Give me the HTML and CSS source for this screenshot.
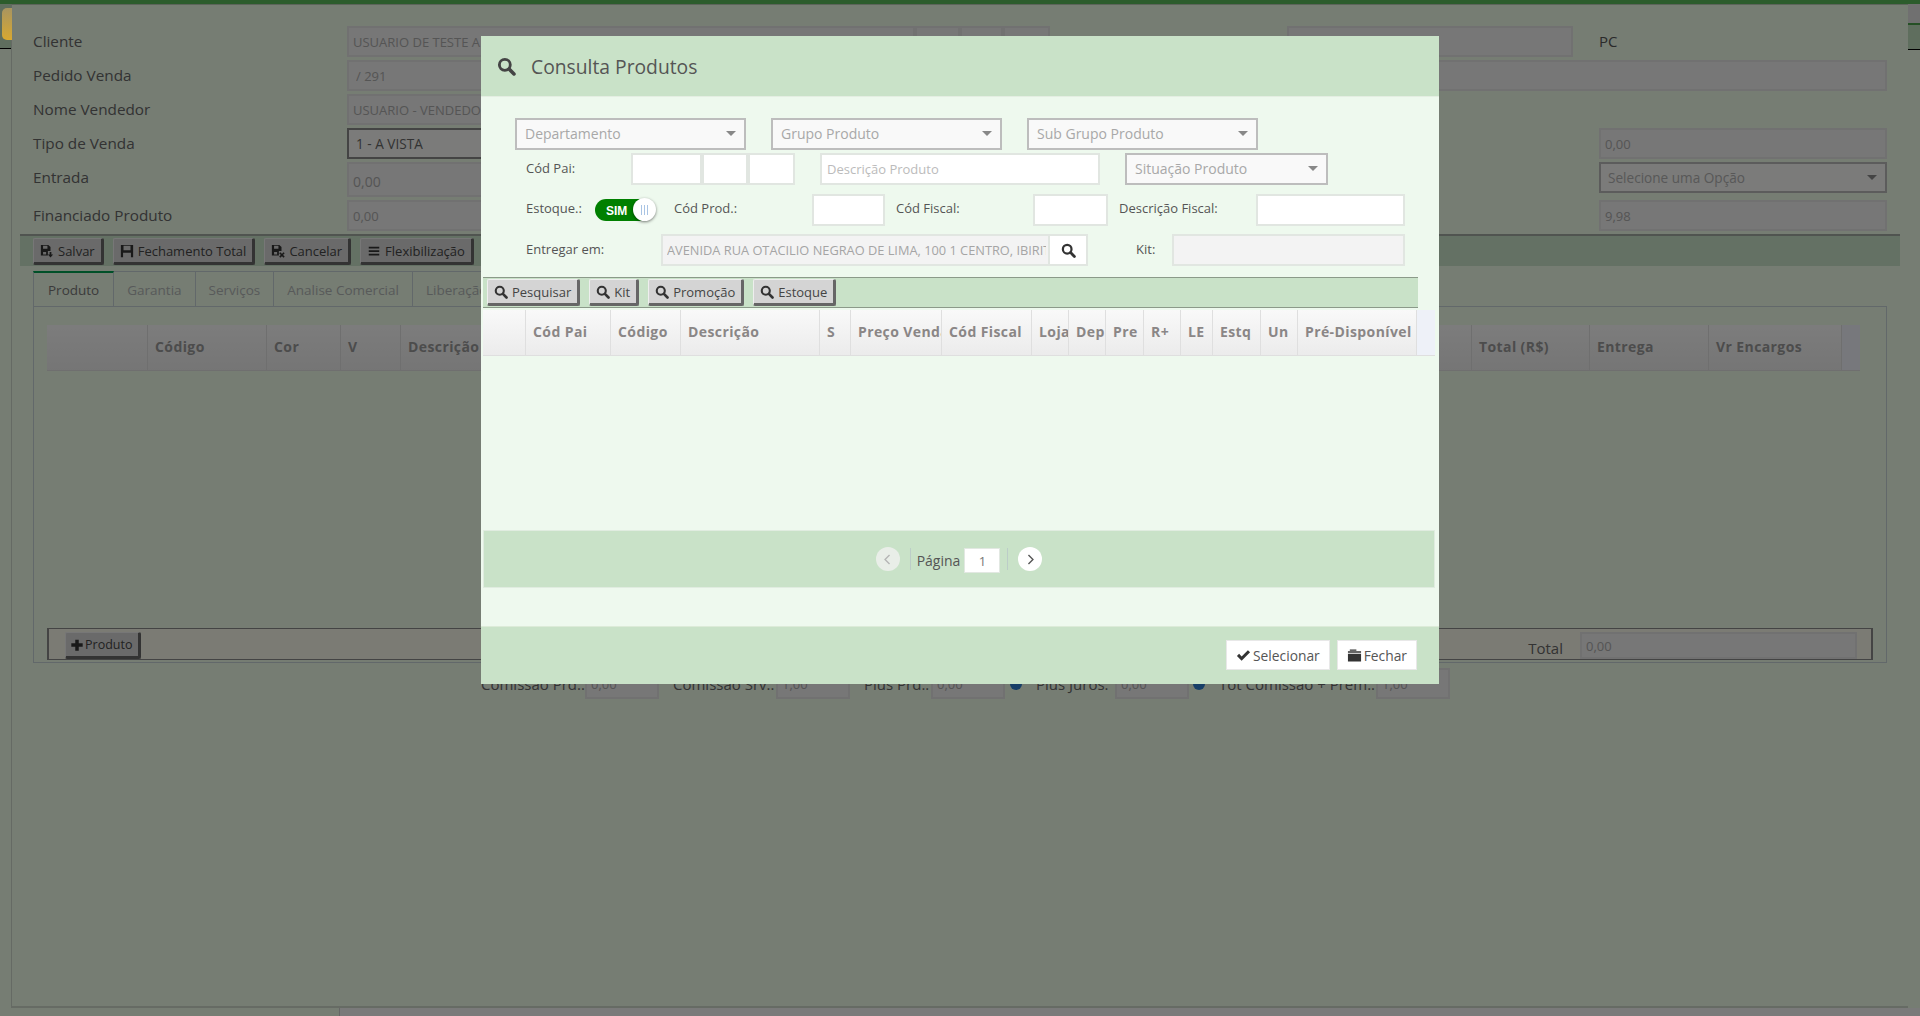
FILE: index.html
```html
<!DOCTYPE html>
<html lang="pt-BR">
<head>
<meta charset="utf-8">
<title>Consulta Produtos</title>
<link rel="stylesheet" href="styles.css">
</head>
<body>
<svg class="defs" aria-hidden="true">
  <symbol id="i-search" viewBox="0 0 16 16"><circle cx="6.6" cy="6.6" r="4.6" fill="none" stroke="currentColor" stroke-width="2.4"/><path d="M10.2 10.2 14.3 14.3" fill="none" stroke="currentColor" stroke-width="3" stroke-linecap="round"/></symbol>
  <symbol id="i-save-down" viewBox="0 0 16 16"><path fill="currentColor" fill-rule="evenodd" d="M1 1h8.500L12 3.500V8H9v5H1zM3.500 2v3.500h5V2zM3.500 9v3h3.500V9z"/><path fill="currentColor" d="M11 9h2v3h2l-3 3.500-3-3.500h2z"/></symbol>
  <symbol id="i-save" viewBox="0 0 16 16"><path fill="currentColor" fill-rule="evenodd" d="M1 1h14v14H1zM4 2v5h8V2zM3.500 10v5h9v-5z"/></symbol>
  <symbol id="i-save-x" viewBox="0 0 16 16"><path fill="currentColor" fill-rule="evenodd" d="M1 1h8.500L12 3.500V8H9v5H1zM3.500 2v3.500h5V2zM3.500 9v3h3.500V9z"/><path fill="none" stroke="currentColor" stroke-width="1.800" d="M10 10l5 5M15 10l-5 5"/></symbol>
  <symbol id="i-bars" viewBox="0 0 16 16"><path fill="currentColor" d="M2 3h12v2H2zM2 7h12v2H2zM2 11h12v2H2z"/></symbol>
  <symbol id="i-plus" viewBox="0 0 16 16"><path fill="currentColor" d="M6 2h4v4h4.500v4H10v4.500H6V10H1.500V6H6z"/></symbol>
  <symbol id="i-check" viewBox="0 0 16 16"><path fill="currentColor" d="M1 8.500 3.300 6.200 6 9 12.700 2.300 15 4.600 6 13.600z"/></symbol>
  <symbol id="i-box" viewBox="0 0 16 16"><path fill="currentColor" d="M1 6h14v8.500H1zM1 3.500h14V5H1zM3 1.500h7V3H3z"/></symbol>
  <symbol id="i-left" viewBox="0 0 16 16"><path fill="none" stroke="currentColor" stroke-width="1.700" d="M10.500 2.500 5 8l5.500 5.500"/></symbol>
  <symbol id="i-right" viewBox="0 0 16 16"><path fill="none" stroke="currentColor" stroke-width="1.700" d="M5.500 2.500 11 8l-5.500 5.500"/></symbol>
</svg>

<div class="page">
  <div class="topline"></div>
  <div class="desk">
    <div class="side side-left"><div class="side-strip"><span class="app-icon"></span></div></div>
    <main class="window">
      <div class="bg-form">
        <div class="bg-row">
          <span class="bg-label">Cliente</span>
          <input class="bg-input w-568" value="USUARIO DE TESTE A" readonly>
          <input class="bg-input w-45" readonly>
          <input class="bg-input w-43" readonly>
          <input class="bg-input w-47" readonly>
          <input class="bg-input w-286 ml-237" readonly>
          <span class="bg-pc">PC</span>
        </div>
        <div class="bg-row">
          <span class="bg-label">Pedido Venda</span>
          <input class="bg-input w-1540 pad-7" value="/ 291" readonly>
        </div>
        <div class="bg-row">
          <span class="bg-label">Nome Vendedor</span>
          <input class="bg-input w-568" value="USUARIO - VENDEDOR" readonly>
        </div>
        <div class="bg-row">
          <span class="bg-label">Tipo de Venda</span>
          <div class="bg-select dark w-568">1 - A VISTA</div>
          <input class="bg-input w-288 ml-684" value="0,00" readonly>
        </div>
        <div class="bg-row tall">
          <span class="bg-label">Entrada</span>
          <input class="bg-input w-568 h-35" value="0,00" readonly>
          <div class="bg-select w-288 ml-684">Selecione uma Opção<i class="caret"></i></div>
        </div>
        <div class="bg-row">
          <span class="bg-label">Financiado Produto</span>
          <input class="bg-input w-568" value="0,00" readonly>
          <input class="bg-input w-288 ml-684" value="9,98" readonly>
        </div>
      </div>

      <div class="toolbar bg-toolbar">
        <button class="tool-btn"><svg class="ic"><use href="#i-save-down"/></svg>Salvar</button>
        <button class="tool-btn"><svg class="ic"><use href="#i-save"/></svg>Fechamento Total</button>
        <button class="tool-btn"><svg class="ic"><use href="#i-save-x"/></svg>Cancelar</button>
        <button class="tool-btn"><svg class="ic"><use href="#i-bars"/></svg>Flexibilização</button>
      </div>

      <div class="tabs">
        <span class="tab active">Produto</span>
        <span class="tab">Garantia</span>
        <span class="tab">Serviços</span>
        <span class="tab">Analise Comercial</span>
        <span class="tab">Liberação</span>
      </div>
      <section class="panel">
        <div class="thead bg-thead">
          <span></span><span>Código</span><span>Cor</span><span>V</span><span>Descrição</span><span>Total (R$)</span><span>Entrega</span><span>Vr Encargos</span><span class="scroller"></span>
        </div>
        <div class="totals">
          <button class="tool-btn small"><svg class="ic"><use href="#i-plus"/></svg>Produto</button>
          <span class="total-label">Total</span>
          <input class="bg-input total-input" value="0,00" readonly>
        </div>
      </section>

      <div class="commission">
        <span class="cm-label w-104">Comissão Prd.:</span><input class="bg-input cm-input" value="0,00" readonly>
        <span class="cm-label w-103 ml-14">Comissão Srv.:</span><input class="bg-input cm-input" value="1,00" readonly>
        <span class="cm-label w-67 ml-14">Plus Prd.:</span><input class="bg-input cm-input" value="0,00" readonly>
        <i class="radio ml-5"></i>
        <span class="cm-label w-79 ml-14">Plus Juros:</span><input class="bg-input cm-input" value="0,00" readonly>
        <i class="radio ml-4"></i>
        <span class="cm-label w-157 ml-14">Tot Comissão + Prem.:</span><input class="bg-input cm-input" value="1,00" readonly>
      </div>
    </main>
    <div class="side side-right"><div class="side-top"></div><div class="side-strip short"></div></div>
  </div>
  <div class="bottom"><div class="bottom-left"></div><div class="bottom-right"></div></div>
</div>

<div class="overlay">
  <div class="modal">
    <header class="modal-head">
      <svg class="head-icon"><use href="#i-search"/></svg>
      <h1>Consulta Produtos</h1>
    </header>
    <div class="modal-body">
      <div class="f-row first">
        <div class="select w-231">Departamento<i class="caret"></i></div>
        <div class="select w-231 ml-25">Grupo Produto<i class="caret"></i></div>
        <div class="select w-231 ml-25">Sub Grupo Produto<i class="caret"></i></div>
      </div>
      <div class="f-row second">
        <label class="f-label w-105">Cód Pai:</label>
        <input class="field w-71">
        <input class="field w-46">
        <input class="field w-47">
        <input class="field w-280 ml-25" placeholder="Descrição Produto">
        <div class="select w-203 ml-25">Situação Produto<i class="caret"></i></div>
      </div>
      <div class="f-row third">
        <label class="f-label w-69">Estoque.:</label>
        <div class="toggle"><span class="toggle-text">SIM</span><span class="knob"><b></b><b></b><b></b></span></div>
        <label class="f-label w-138 ml-19">Cód Prod.:</label>
        <input class="field w-73">
        <label class="f-label w-137 ml-11">Cód Fiscal:</label>
        <input class="field w-75">
        <label class="f-label w-137 ml-11">Descrição Fiscal:</label>
        <input class="field w-149">
      </div>
      <div class="f-row fourth">
        <label class="f-label w-135">Entregar em:</label>
        <input class="field off address w-389" value="AVENIDA RUA OTACILIO NEGRAO DE LIMA, 100 1 CENTRO, IBIRITE" readonly>
        <button class="search-btn"><svg class="ic-16"><use href="#i-search"/></svg></button>
        <label class="f-label w-36 ml-48">Kit:</label>
        <input class="field off w-233" readonly>
      </div>

      <div class="toolbar modal-toolbar">
        <button class="tool-btn"><svg class="ic"><use href="#i-search"/></svg>Pesquisar</button>
        <button class="tool-btn"><svg class="ic"><use href="#i-search"/></svg>Kit</button>
        <button class="tool-btn"><svg class="ic"><use href="#i-search"/></svg>Promoção</button>
        <button class="tool-btn"><svg class="ic"><use href="#i-search"/></svg>Estoque</button>
      </div>

      <div class="thead modal-thead">
        <span></span><span>Cód Pai</span><span>Código</span><span>Descrição</span><span>S</span><span>Preço Venda</span><span>Cód Fiscal</span><span>Loja</span><span>Dep</span><span>Pre</span><span>R+</span><span>LE</span><span>Estq</span><span>Un</span><span>Pré-Disponível</span><span class="scroller"></span>
      </div>
      <div class="grid-empty"></div>

      <div class="pager">
        <span class="circle off"><svg class="ic-12"><use href="#i-left"/></svg></span>
        <i class="pager-sep first-sep"></i>
        <span class="pager-text">Página</span>
        <input class="pager-input" value="1" readonly>
        <i class="pager-sep"></i>
        <span class="circle next"><svg class="ic-12"><use href="#i-right"/></svg></span>
      </div>
    </div>
    <footer class="modal-foot">
      <button class="foot-btn"><svg class="ic-14"><use href="#i-check"/></svg>Selecionar</button>
      <button class="foot-btn"><svg class="ic-14"><use href="#i-box"/></svg>Fechar</button>
    </footer>
  </div>
</div>
</body>
</html>
```

FILE: styles.css
```css
* { box-sizing: border-box; }
html, body { margin: 0; height: 1016px; overflow: hidden; }
body { font-family: "Open Sans", sans-serif; color: #555; background: #ecfae6; position: relative; }
.defs { position: absolute; width: 0; height: 0; }
input, button { font-family: inherit; outline: none; margin: 0; }

.page { height: 1016px; display: flex; flex-direction: column; }
.topline { height: 4px; background: #58b858; flex: none; }
.desk { display: flex; height: 1004px; flex: none; }
.side { width: 12px; flex: none; }
.side-left { width: 11px; }
.side-strip { height: 45px; background: #bfdcbc; border-bottom: 1px solid #000; position: relative; }
.side-strip.short { height: 25px; }
.app-icon { display: block; width: 10px; height: 32px; margin-left: 2px; background: linear-gradient(#a89560, #d8a830); border-radius: 5px 0 0 5px; position: relative; top: 4px; z-index: 2; }
.side-top { height: 21px; background: #e0e0e0; border-bottom: 2px solid #4aa04a; }
.window { width: 1897px; flex: none; border-left: 1px solid #cbd4c8; border-top: 1px solid #b8c8b4; border-bottom: 2px solid #ccd6c8; padding-top: 21px; display: flex; flex-direction: column; }

.bg-form { padding-left: 21px; display: flex; flex-direction: column; gap: 3px; }
.bg-row { display: flex; height: 31px; align-items: flex-start; }
.bg-row.tall { height: 35px; }
.bg-label { width: 314px; flex: none; font-size: 15.300px; line-height: 31px; color: #666; }
.bg-pc { margin-left: 26px; font-size: 15px; line-height: 31px; color: #555; }
.bg-input { height: 31px; flex: none; border: 2px solid #e2e2e2; background: #eeeeee; color: #aaa; font-size: 13px; padding: 0 4px; }
.pad-7 { padding-left: 7px; }
.h-35 { height: 35px; font-size: 14px; padding-top: 3px; }
.bg-select { height: 31px; flex: none; border: 2px solid #b8b8b8; background: #f6f6f4; color: #b0b0b0; font-size: 13.600px; line-height: 28px; padding: 0 7px; position: relative; }
.bg-select.dark { border-color: #888; color: #666; }

.toolbar { display: flex; flex: none; background: #c9e2c8; border-top: 1px solid #8b9a89; border-bottom: 1px solid #8b9a89; }
.bg-toolbar { margin: 3px 0 0 8px; width: 1880px; height: 32px; padding: 2px 0 0 13px; gap: 9px; border-bottom: 0; border-top: 2px solid #a0a8a0; }
.modal-toolbar { margin: 11px 0 0 2px; width: 935px; height: 31px; padding: 1px 0 0 4px; gap: 9px; }
.tool-btn { height: 27px; padding: 0 6px; display: flex; align-items: center; gap: 4px; font-size: 13px; color: #444; background: #d4d4d4; border: 0; border-right: 3px solid #666; border-bottom: 3px solid #666; border-top: 1px solid #eee; border-left: 1px solid #eee; border-radius: 2px; white-space: nowrap; }
.ic { width: 14px; height: 14px; flex: none; color: #333; }
.ic-16 { width: 15px; height: 15px; color: #333; display: block; }
.ic-14 { width: 15px; height: 15px; color: #333; flex: none; }
.ic-12 { width: 13px; height: 13px; display: block; }

.tabs { display: flex; margin: 5px 0 0 21px; height: 36px; flex: none; }
.tab { height: 36px; padding: 0 13px; font-size: 13.500px; line-height: 36px; color: #b0b4b4; border: 1px solid #c4d0d4; border-left: 0; white-space: nowrap; }
.tab.active { color: #777; border-top: 2px solid #00a050; border-bottom: 0; border-left: 1px solid #c4d0d4; background: #ecfae6; line-height: 34px; padding: 0 14px; }
.panel { margin: -1px 0 0 21px; width: 1854px; height: 357px; flex: none; border: 1px solid #c4d0d4; display: flex; flex-direction: column; }
.thead { display: grid; background: linear-gradient(#f9f9f9, #ebebeb); flex: none; font-size: 14px; font-weight: 700; color: #8a8686; letter-spacing: .4px; }
.thead > span { border-right: 1px solid #dfdfdf; border-bottom: 1px solid #dfdfdf; padding-left: 7px; overflow: hidden; white-space: nowrap; }
.thead > .scroller { background: #eef1f8; border-right: 0; }
.bg-thead { margin: 18px 0 0 13px; width: 1813px; height: 46px; line-height: 44px; grid-template-columns: 101px 119px 74px 60px 1071px 118px 119px 133px 18px; color: #999; }
.totals { margin: auto 0 2px 13px; width: 1826px; height: 32px; border: 2px solid #888; border-top-width: 1px; border-bottom-width: 1px; background: #f6f6e8; display: flex; align-items: flex-end; padding-left: 16px; flex: none; }
.tool-btn.small { width: 76px; height: 27px; gap: 1px; padding: 0 4px; font-size: 12.500px; color: #444; }
.total-label { margin-left: auto; font-size: 15px; color: #666; line-height: 21px; }
.total-input { width: 277px; height: 27px; margin: 0 14px 0 17px; }

.commission { display: flex; align-items: center; margin: 5px 0 0 469px; height: 31px; flex: none; font-size: 15px; color: #666; }
.cm-label { flex: none; white-space: nowrap; }
.cm-input { width: 74px; height: 31px; font-size: 13px; }
.radio { width: 12px; height: 12px; flex: none; border-radius: 50%; background: #2f7fd0; }

.bottom { display: flex; height: 8px; flex: none; }
.bottom-left { width: 339px; }
.bottom-right { flex: 1; background: #f4f4f4; border-left: 1px solid #ccc; }

.overlay { position: absolute; inset: 0; background: rgba(0,0,0,.5); }
.modal { width: 958px; height: 648px; margin: 36px auto 0; display: flex; flex-direction: column; background: #eef9ee; }
.modal-head { height: 61px; flex: none; background: #c9e2c8; border-bottom: 1px solid #e4eee2; display: flex; align-items: center; padding-left: 16px; }
.head-icon { width: 19px; height: 19px; color: #444; flex: none; }
.modal-head h1 { margin: 0 0 0 15px; font-size: 19.300px; font-weight: 400; color: #555; }
.modal-body { flex: 1; display: flex; flex-direction: column; }

.f-row { display: flex; align-items: center; height: 32px; flex: none; padding-left: 45px; }
.f-row.first { padding-left: 34px; margin-top: 21px; }
.f-row.second { margin-top: 3px; }
.f-row.third { margin-top: 9px; }
.f-row.fourth { margin-top: 8px; }
.f-label { flex: none; font-size: 13px; color: #555; padding-bottom: 3px; }
.third .f-label { padding-bottom: 5px; }
.select { height: 32px; flex: none; border: 2px solid #bdbdbd; background: #f9f9f9; color: #a8a8a8; font-size: 14px; line-height: 28px; padding: 0 8px; position: relative; }
.caret { position: absolute; right: 8px; top: 11px; width: 0; height: 0; border-left: 5px solid transparent; border-right: 5px solid transparent; border-top: 5px solid #888; }
.field { height: 32px; flex: none; border: 2px solid #e1e6e1; background: #fff; color: #aaa; font-size: 13px; padding: 0 5px; }
.field::placeholder { color: #bbb; }
.field.off { background: #f3f3f3; color: #a5a5a5; }
.field.address { font-size: 12.800px; padding: 0 2px 0 4px; }
.search-btn { width: 38px; height: 32px; flex: none; background: #fff; border: 2px solid #e1e6e1; border-left: 0; display: flex; align-items: center; justify-content: center; padding: 0; }

.toggle { width: 55px; height: 22px; margin-right: 5px; flex: none; position: relative; background: #008000; border-radius: 11px; }
.toggle-text { display: block; padding-left: 11px; font: 700 12px/24px "Liberation Sans", sans-serif; color: #fff; }
.knob { position: absolute; right: -6px; top: -1px; width: 23px; height: 23px; border-radius: 50%; background: #fff; box-shadow: 0 1px 3px rgba(0,0,0,.5); display: flex; gap: 2px; align-items: center; justify-content: center; }
.knob b { width: 1px; height: 10px; background: #a9c4e4; }

.modal-thead { margin: 2px 0 0 2px; width: 952px; height: 46px; line-height: 44px; grid-template-columns: 43px 85px 70px 139px 31px 91px 90px 37px 37px 38px 37px 32px 48px 37px 119px 18px; }
.grid-empty { height: 174px; flex: none; }
.pager { margin-left: 2px; width: 952px; height: 58px; flex: none; background: #c9e2c8; border: 1px solid #e0ece0; display: flex; justify-content: center; align-items: flex-start; padding-top: 16px; }
.circle { width: 24px; height: 24px; flex: none; border-radius: 50%; display: flex; align-items: center; justify-content: center; background: #fff; color: #555; }
.circle.off { background: #e9eee8; color: #b5b5b5; }
.pager-sep { width: 1px; height: 22px; flex: none; background: #bccdc8; margin: 1px 0 0 7px; }
.pager-sep.first-sep { margin-left: 10px; }
.pager-text { margin: 1px 0 0 6px; font-size: 14px; line-height: 26px; color: #555; }
.pager-input { width: 36px; height: 25px; margin: 1px 0 0 4px; border: 1px solid #e2e8e2; background: #fff; text-align: center; font-size: 13px; color: #777; padding: 0; }
.pager-sep + .circle { margin-left: 10px; }
.modal-foot { height: 58px; flex: none; background: #c9e2c8; border-top: 1px solid #dcebd8; display: flex; justify-content: flex-end; gap: 7px; padding: 13px 22px 0 0; }
.foot-btn { height: 30px; padding: 0 9px; display: flex; align-items: center; gap: 2px; font-size: 13.800px; color: #555; background: #fff; border: 1px solid #e8e8e8; }

.w-36 { width: 36px; } .w-45 { width: 45px; } .w-43 { width: 43px; } .w-46 { width: 46px; } .w-47 { width: 47px; }
.w-67 { width: 67px; } .w-69 { width: 69px; } .w-71 { width: 71px; } .w-73 { width: 73px; } .w-75 { width: 75px; }
.w-79 { width: 79px; } .w-103 { width: 103px; } .w-104 { width: 104px; } .w-105 { width: 105px; }
.w-135 { width: 135px; } .w-137 { width: 137px; } .w-138 { width: 138px; } .w-149 { width: 149px; } .w-157 { width: 157px; }
.w-203 { width: 203px; } .w-231 { width: 231px; } .w-233 { width: 233px; } .w-280 { width: 280px; } .w-286 { width: 286px; }
.w-288 { width: 288px; } .w-389 { width: 389px; } .w-568 { width: 568px; } .w-1540 { width: 1540px; }
.ml-4 { margin-left: 4px; } .ml-5 { margin-left: 5px; } .ml-11 { margin-left: 11px; } .ml-14 { margin-left: 14px; } .ml-19 { margin-left: 19px; }
.ml-25 { margin-left: 25px; } .ml-48 { margin-left: 48px; } .ml-237 { margin-left: 237px; } .ml-684 { margin-left: 684px; }
```
